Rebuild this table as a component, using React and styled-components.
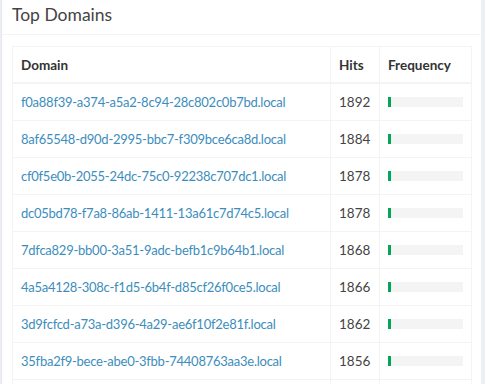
import React from 'react';
import styled, { createGlobalStyle } from 'styled-components';

const GlobalStyle = createGlobalStyle`
  body {
    margin: 0;
    background: #ecf0f5;
    font-family: Lato, "Open Sans", "Liberation Sans", sans-serif;
    color: #333;
  }
`;

const domains = [
  ['f0a88f39-a374-a5a2-8c94-28c802c0b7bd.local', 1892],
  ['8af65548-d90d-2995-bbc7-f309bce6ca8d.local', 1884],
  ['cf0f5e0b-2055-24dc-75c0-92238c707dc1.local', 1878],
  ['dc05bd78-f7a8-86ab-1411-13a61c7d74c5.local', 1878],
  ['7dfca829-bb00-3a51-9adc-befb1c9b64b1.local', 1868],
  ['4a5a4128-308c-f1d5-6b4f-d85cf26f0ce5.local', 1866],
  ['3d9fcfcd-a73a-d396-4a29-ae6f10f2e81f.local', 1862],
  ['35fba2f9-bece-abe0-3fbb-74408763aa3e.local', 1856],
];

const totalHits = 46000;

export default function App() {
  return (
    <>
      <GlobalStyle />
      <Page>
        <Box>
          <BoxHeader>
            <Title>Top Domains</Title>
          </BoxHeader>
          <BoxBody>
            <Table>
              <colgroup>
                <col />
                <col width="49" />
                <col width="92" />
              </colgroup>
              <thead>
                <tr>
                  <Th>Domain</Th>
                  <Th>Hits</Th>
                  <Th>Frequency</Th>
                </tr>
              </thead>
              <tbody>
                {domains.map(([name, hits]) => (
                  <tr key={name}>
                    <Td><DomainLink href="#">{name}</DomainLink></Td>
                    <Td>{hits}</Td>
                    <Td>
                      <Progress>
                        <Bar style={{ width: (hits / totalHits * 100) + '%' }} />
                      </Progress>
                    </Td>
                  </tr>
                ))}
                {/* next row, scrolled below the fold */}
                <tr>
                  <Td />
                  <Td />
                  <Td />
                </tr>
              </tbody>
            </Table>
          </BoxBody>
        </Box>
      </Page>
    </>
  );
}

const Page = styled.div`
  height: 384px;
  overflow: hidden;
  padding: 0 4px 0 1px;
`;

const Box = styled.div`
  background: #fff;
  border-left: 1px solid #e4e8ee;
  height: 100%;
`;

const BoxHeader = styled.div`
  padding: 4px 10px 9px 10px;
  border-bottom: 1px solid #f4f4f4;
`;

const Title = styled.h3`
  margin: 0;
  font-size: 17.5px;
  font-weight: 400;
  line-height: 21px;
  color: #444;
`;

const BoxBody = styled.div`
  padding: 11px 9px 10px 10px;
`;

const Table = styled.table`
  width: 100%;
  table-layout: fixed;
  border-collapse: collapse;
  border: 1px solid #f4f4f4;
  font-size: 13px;
`;

const Th = styled.th`
  text-align: left;
  font-weight: 700;
  font-size: 13.5px;
  line-height: 20px;
  color: #333;
  padding: 8px 8px 7px;
  border: 1px solid #f4f4f4;
  border-bottom-width: 2px;
  white-space: nowrap;
`;

const Td = styled.td`
  padding: 8px;
  height: 20px;
  line-height: 20px;
  border: 1px solid #f4f4f4;
  color: #444;
  font-size: 13.5px;
  white-space: nowrap;
`;

const DomainLink = styled.a`
  color: #3c8dbc;
  font-size: 13px;
  letter-spacing: -0.25px;
  text-decoration: none;
`;

const Progress = styled.div`
  height: 10px;
  background: #f4f4f4;
  overflow: hidden;
`;

const Bar = styled.div`
  height: 100%;
  background: #00a65a;
  min-width: 3px;
`;
